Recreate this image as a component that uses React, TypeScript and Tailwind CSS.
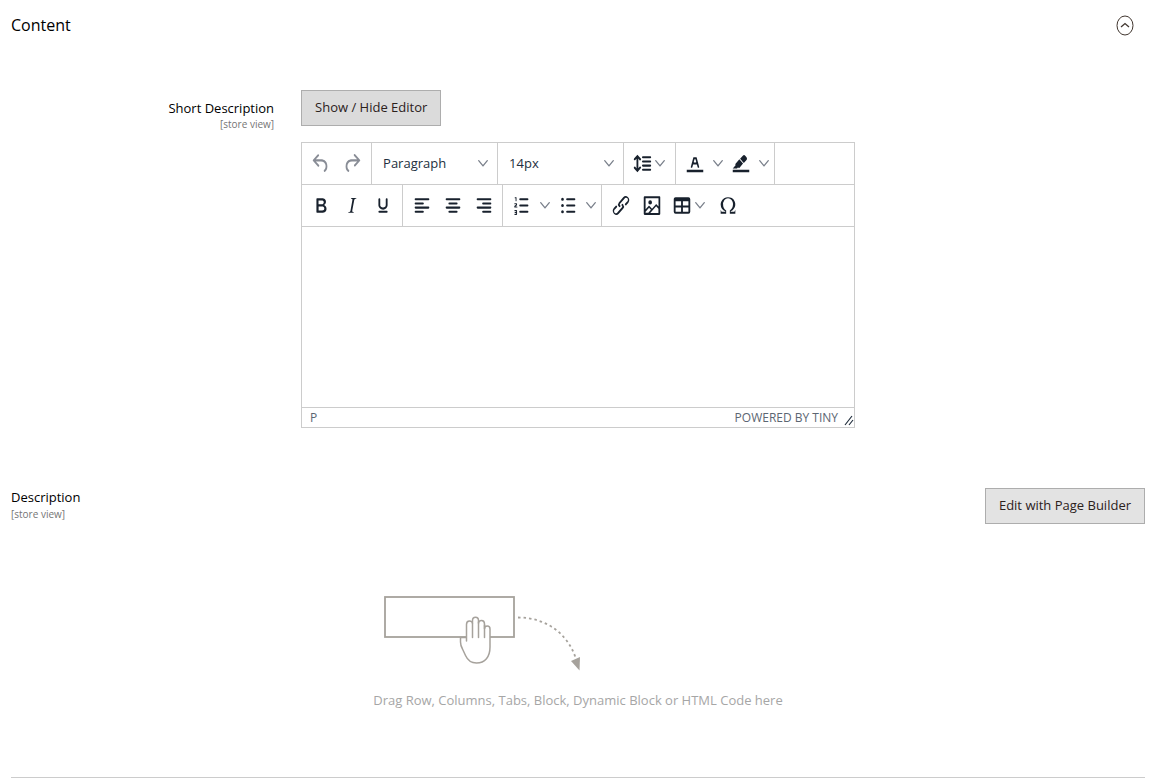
import { useState, type ReactNode } from "react";

const icons = {
  undo: "M6.4 8H12c3.7 0 6.2 2 6.8 5.1.6 2.7-.4 5.6-2.3 6.8a1 1 0 0 1-1-1.8c1.1-.6 1.8-2.7 1.4-4.6-.5-2.1-2.1-3.5-4.9-3.5H6.4l3.3 3.3a1 1 0 1 1-1.4 1.4l-5-5a1 1 0 0 1 0-1.4l5-5a1 1 0 0 1 1.4 1.4L6.4 8Z",
  redo: "M17.6 10H12c-2.8 0-4.4 1.4-4.9 3.5-.4 2 .3 4 1.4 4.6a1 1 0 1 1-1 1.8c-2-1.2-2.9-4.1-2.3-6.8.6-3 3-5.1 6.8-5.1h5.6l-3.3-3.3a1 1 0 1 1 1.4-1.4l5 5a1 1 0 0 1 0 1.4l-5 5a1 1 0 0 1-1.4-1.4l3.3-3.3Z",
  lineHeight:
    "M21 5a1 1 0 0 1 0 2h-8a1 1 0 0 1 0-2h8Zm0 4a1 1 0 0 1 0 2h-8a1 1 0 0 1 0-2h8Zm0 4a1 1 0 0 1 0 2h-8a1 1 0 0 1 0-2h8Zm0 4a1 1 0 0 1 0 2h-8a1 1 0 0 1 0-2h8ZM7 3.6l3.7 3.7a1 1 0 0 1-1.3 1.5h-.1L8 7.3v9.2l1.3-1.3a1 1 0 0 1 1.3 0h.1c.4.4.4 1 0 1.3v.1L7 20.4l-3.7-3.7a1 1 0 0 1 1.3-1.5h.1L6 16.7V7.4L4.7 8.7a1 1 0 0 1-1.3 0h-.1a1 1 0 0 1 0-1.3v-.1L7 3.6Z",
  textColor:
    "M3 18h18v2.500H3zM8.7 16h-.8a.5.5 0 0 1-.5-.6l2.7-9c.1-.3.3-.4.5-.4h2.8c.2 0 .4.1.5.4l2.7 9a.5.5 0 0 1-.5.6h-.8a.5.5 0 0 1-.4-.4l-.7-2.2c0-.3-.3-.4-.5-.4h-3.4c-.2 0-.4.1-.5.4l-.7 2.2c0 .3-.2.4-.4.4zm2.6-7.6l-.6 2a.5.5 0 0 0 .5.6h1.6a.5.5 0 0 0 .5-.6l-.6-2c0-.3-.3-.4-.5-.4h-.4c-.2 0-.4.1-.5.4z",
  highlight:
    "M3 18h18v2.500H3zM7.7 16.7H3l3.3-3.3-.7-.8L10.2 8l4 4.1-4 4.2c-.2.2-.6.2-.8 0l-.6-.7-1.1 1.1zm5-7.500L11 7.4l3-2.9a2 2 0 0 1 2.6 0L18 6c.7.7.7 2 0 2.7l-2.9 2.9-1.8-1.8-.5-.6Z",
  bold: "M7.8 19c-.3 0-.5 0-.6-.2l-.2-.5V5.7c0-.2 0-.4.2-.5l.6-.2h5c1.5 0 2.7.3 3.5 1 .7.6 1.1 1.4 1.1 2.5a3 3 0 0 1-.6 1.9c-.4.6-1 1-1.6 1.2.4.1.9.3 1.3.6s.8.7 1 1.2c.4.4.5 1 .5 1.6 0 1.3-.4 2.3-1.3 3-.8.7-2.1 1-3.8 1H7.8Zm5-8.3c.6 0 1.2-.1 1.6-.5.4-.3.6-.7.6-1.3 0-1.1-.8-1.7-2.3-1.7H9.3v3.5h3.4Zm.5 6c.7 0 1.3-.1 1.7-.4.4-.4.6-.9.6-1.5s-.2-1-.7-1.4c-.4-.3-1-.4-2-.4H9.4v3.8h4Z",
  italic:
    "m16.7 4.7-.1.9h-.3c-.6 0-1 0-1.4.3-.3.3-.4.6-.5 1.1l-2.1 9.8v.6c0 .5.4.8 1.4.8h.2l-.2.8H8l.2-.8h.2c1.1 0 1.8-.5 2-1.5l2-9.8.1-.5c0-.6-.4-.8-1.4-.8h-.3l.2-.9h5.8Z",
  underline:
    "M16 5c.6 0 1 .4 1 1v5.5a4 4 0 0 1-.4 1.8l-1 1.4a5.3 5.3 0 0 1-5.5 1 5 5 0 0 1-1.6-1c-.5-.4-.8-.9-1.1-1.4a4 4 0 0 1-.4-1.8V6c0-.6.4-1 1-1s1 .4 1 1v5.5c0 .3 0 .6.2 1l.6.7a3.3 3.3 0 0 0 2.2.8 3.4 3.4 0 0 0 2.2-.8c.3-.2.4-.5.6-.8l.2-.9V6c0-.6.4-1 1-1ZM8 17h8c.6 0 1 .4 1 1s-.4 1-1 1H8a1 1 0 0 1 0-2Z",
  alignLeft:
    "M5 5h14a1 1 0 0 1 0 2H5a1 1 0 1 1 0-2Zm0 4h8a1 1 0 0 1 0 2H5a1 1 0 1 1 0-2Zm0 8h8a1 1 0 0 1 0 2H5a1 1 0 0 1 0-2Zm0-4h14a1 1 0 0 1 0 2H5a1 1 0 0 1 0-2Z",
  alignCenter:
    "M5 5h14a1 1 0 0 1 0 2H5a1 1 0 1 1 0-2Zm3 4h8a1 1 0 0 1 0 2H8a1 1 0 1 1 0-2Zm0 8h8a1 1 0 0 1 0 2H8a1 1 0 0 1 0-2Zm-3-4h14a1 1 0 0 1 0 2H5a1 1 0 0 1 0-2Z",
  alignRight:
    "M5 5h14a1 1 0 0 1 0 2H5a1 1 0 1 1 0-2Zm6 4h8a1 1 0 0 1 0 2h-8a1 1 0 0 1 0-2Zm0 8h8a1 1 0 0 1 0 2h-8a1 1 0 0 1 0-2Zm-6-4h14a1 1 0 0 1 0 2H5a1 1 0 0 1 0-2Z",
  numbered:
    "M10 17h8a1 1 0 0 1 0 2h-8a1 1 0 0 1 0-2Zm0-6h8a1 1 0 0 1 0 2h-8a1 1 0 0 1 0-2Zm0-6h8a1 1 0 1 1 0 2h-8a1 1 0 1 1 0-2ZM6 4v3.5a.5.5 0 0 1-1 0V5h-.5a.5.5 0 0 1 0-1H6Zm-1 8.8.2.2h1.3a.5.5 0 0 1 0 1H4.1a.5.5 0 0 1-.5-.5V13c0-.3.1-.5.3-.7l1.5-1.1.1-.2-.2-.2H4.1a.5.5 0 0 1 0-1H6c.3 0 .6.3.6.6v.9c0 .3-.1.5-.3.7L5 12.8ZM6.6 17v3.4c0 .3-.3.6-.6.6H4.2a.5.5 0 0 1 0-1h1.4v-.8H4.4a.5.5 0 0 1 0-1h1.2v-.8H4.2a.5.5 0 0 1 0-1H6c.3 0 .6.3.6.6Z",
  bullets:
    "M11 5h8a1 1 0 0 1 0 2h-8a1 1 0 0 1 0-2Zm0 6h8a1 1 0 0 1 0 2h-8a1 1 0 0 1 0-2Zm0 6h8a1 1 0 0 1 0 2h-8a1 1 0 0 1 0-2ZM4.5 6a1.5 1.5 0 1 1 3 0 1.5 1.5 0 0 1-3 0Zm0 6a1.5 1.5 0 1 1 3 0 1.5 1.5 0 0 1-3 0Zm0 6a1.5 1.5 0 1 1 3 0 1.5 1.5 0 0 1-3 0Z",
  link: "M6.2 12.3a1 1 0 0 1 1.4 1.4l-2 2a2 2 0 1 0 2.6 2.8l4.8-4.8a1 1 0 0 0 0-1.4 1 1 0 1 1 1.4-1.3 2.9 2.9 0 0 1 0 4L9.6 20a3.9 3.9 0 0 1-5.5-5.5l2-2Zm11.6-.6a1 1 0 0 1-1.4-1.4l2-2a2 2 0 1 0-2.6-2.8L11 10.3a1 1 0 0 0 0 1.4A1 1 0 1 1 9.6 13a2.9 2.9 0 0 1 0-4L14.4 4a3.9 3.9 0 0 1 5.5 5.5l-2 2Z",
  image:
    "m5 15.7 3.3-3.2c.3-.3.7-.3 1 0L12 15l4.1-4c.3-.4.8-.4 1 0l2 1.9V5H5v10.7ZM5 18V19h3l2.8-2.9-2-2L5 17.9Zm14-3-2.5-2.4-6.4 6.5H19v-4ZM4 3h16c.6 0 1 .4 1 1v16c0 .6-.4 1-1 1H4a1 1 0 0 1-1-1V4c0-.6.4-1 1-1Zm6 8a2 2 0 1 0 0-4 2 2 0 0 0 0 4Z",
  table:
    "M19 4a2 2 0 0 1 2 2v12a2 2 0 0 1-2 2H5a2 2 0 0 1-2-2V6c0-1.1.9-2 2-2h14ZM5 14v4h6v-4H5Zm14 0h-6v4h6v-4Zm0-6h-6v4h6V8ZM5 12h6V8H5v4Z",
  omega:
    "M15 18h4l1-2v4h-6v-3.3l1.4-1a6 6 0 0 0 1.8-2.9 6.3 6.3 0 0 0-.1-4.1 5.8 5.8 0 0 0-3-3.2c-.6-.3-1.3-.5-2.1-.5a5.1 5.1 0 0 0-3.9 1.8 6.3 6.3 0 0 0-1.3 6 6.2 6.2 0 0 0 1.8 3l1.4.9V20H4v-4l1 2h4v-.5l-2-1L5.4 15A6.5 6.5 0 0 1 4 11c0-1 .2-1.9.6-2.7A7 7 0 0 1 7.8 5C9.1 4.3 10.5 4 12 4s2.9.3 4.2.9a7 7 0 0 1 3.2 3.5 6.4 6.4 0 0 1-.9 6.5L17 16.5l-2 1v.5Z",
};

type IconName = keyof typeof icons;

function Icon({ name }: { name: IconName }) {
  return (
    <svg viewBox="0 0 24 24" preserveAspectRatio="none" aria-hidden="true" className="h-[25px] w-[22px] shrink-0 fill-current">
      <path fillRule="evenodd" d={icons[name]} />
    </svg>
  );
}

function Chevron() {
  return (
    <svg viewBox="0 0 10 11" aria-hidden="true" className="h-[11px] w-[10px] shrink-0 fill-none stroke-[#7a808b]">
      <path d="M.7 2.700 5 7.900 9.300 2.700" strokeWidth="1.300" strokeLinecap="round" strokeLinejoin="round" />
    </svg>
  );
}

function Group({ children, edge }: { children: ReactNode; edge?: "first" | "last" }) {
  const padding = edge === "first" ? "border-r pr-1 pl-[3px]" : edge === "last" ? "px-[3px]" : "border-r px-[3px]";
  return <div className={`flex border-[#ccc] ${padding}`}>{children}</div>;
}

function Tool({ name, label, disabled = false }: { name: IconName; label: string; disabled?: boolean }) {
  return (
    <button type="button" aria-label={label} disabled={disabled} className="flex w-[31px] items-center justify-center disabled:text-[#898d96]">
      <Icon name={name} />
    </button>
  );
}

function SplitTool({ name, label }: { name: IconName; label: string }) {
  return (
    <div className="flex">
      <Tool name={name} label={label} />
      <button type="button" aria-label={`${label} options`} className="flex w-[15px] items-center justify-center">
        <Chevron />
      </button>
    </div>
  );
}

function MenuTool({ name, label }: { name: IconName; label: string }) {
  return (
    <button type="button" aria-label={label} className="flex w-[45px] items-center gap-[2px] pl-1">
      <Icon name={name} />
      <Chevron />
    </button>
  );
}

function Picker({ label, options }: { label: string; options: string[] }) {
  return (
    <div className="relative flex w-[126px] items-center border-r border-[#ccc]">
      <select aria-label={label} className="h-full w-full appearance-none bg-transparent pr-6 pl-[11px] text-[13px] text-[#222f3e] outline-none">
        {options.map((option) => (
          <option key={option}>{option}</option>
        ))}
      </select>
      <span className="pointer-events-none absolute right-[9px]">
        <Chevron />
      </span>
    </div>
  );
}

function ActionButton({ children, onClick, className }: { children: ReactNode; onClick?: () => void; className: string }) {
  return (
    <button type="button" onClick={onClick} className={`h-9 border border-[#adadad] px-[13px] text-[13px] font-medium text-[#2b211b] ${className}`}>
      {children}
    </button>
  );
}

function Editor() {
  return (
    <div className="border border-[#ccc] text-[#18212d]">
      <div role="toolbar" aria-label="Text style" className="flex h-[42px] border-b border-[#ccc]">
        <Group edge="first">
          <Tool name="undo" label="Undo" disabled />
          <Tool name="redo" label="Redo" disabled />
        </Group>
        <Picker label="Block format" options={["Paragraph", "Heading 1", "Heading 2"]} />
        <Picker label="Font size" options={["14px", "16px", "18px"]} />
        <Group>
          <MenuTool name="lineHeight" label="Line height" />
        </Group>
        <Group>
          <SplitTool name="textColor" label="Text color" />
          <SplitTool name="highlight" label="Background color" />
        </Group>
      </div>
      <div role="toolbar" aria-label="Formatting" className="flex h-[42px] border-b border-[#ccc]">
        <Group edge="first">
          <Tool name="bold" label="Bold" />
          <Tool name="italic" label="Italic" />
          <Tool name="underline" label="Underline" />
        </Group>
        <Group>
          <Tool name="alignLeft" label="Align left" />
          <Tool name="alignCenter" label="Align center" />
          <Tool name="alignRight" label="Align right" />
        </Group>
        <Group>
          <SplitTool name="numbered" label="Numbered list" />
          <SplitTool name="bullets" label="Bullet list" />
        </Group>
        <Group edge="last">
          <Tool name="link" label="Insert link" />
          <Tool name="image" label="Insert image" />
          <MenuTool name="table" label="Table" />
          <Tool name="omega" label="Special character" />
        </Group>
      </div>
      <textarea id="short-description" className="block h-[180px] w-full resize-none p-3 text-[13px] outline-none" />
      <div className="flex h-5 items-center border-t border-[#ccc] pl-2 text-xs text-[#5c6672]">
        <span className="grow">P</span>
        <a href="#tiny">POWERED BY TINY</a>
        <svg viewBox="0 0 10 12" aria-hidden="true" className="mt-1 ml-[6px] h-3 w-[10px] fill-none stroke-[#222f3e]">
          <path d="M1 11 8 2M5 11 9 6" strokeWidth="1.2" />
        </svg>
      </div>
    </div>
  );
}

function DropIllustration() {
  return (
    <svg viewBox="384 595 198 76" aria-hidden="true" className="ml-[11px] h-[76px] w-[198px] fill-none stroke-[#a6a29c]">
      <rect x="385" y="597" width="129" height="40" strokeWidth="1.8" />
      <path
        fill="#fff"
        strokeWidth="1.5"
        strokeLinecap="round"
        d="M466.500 641V624.500c0-4.500 6-4.500 6-.5v-3.500c0-4.500 6-4.500 6 0v3c0-4 6-4 6 .5v5c0-4 5.500-4 5.500 0V647c0 10-5 16-13.500 16-5 0-8.500-2-11-7.500l-3-6.500c-1.500-2.500-2-4-2-7v-4.500h6"
      />
      <path strokeWidth="1.500" strokeLinecap="round" d="M472.500 624v13.500M478.500 622v15.500M484.500 625v12.500" />
      <path strokeWidth="1.800" strokeDasharray="2.500 3" d="M518 617.500c27 0 49 15 57.500 40" />
      <path d="m571 661 9-4-.5 13.500Z" className="fill-[#a6a29c] stroke-none" />
    </svg>
  );
}

export default function App() {
  const [open, setOpen] = useState(true);
  const [showEditor, setShowEditor] = useState(true);

  return (
    <main className="bg-white pr-4 pl-[11px] font-['Open_Sans','Noto_Sans',sans-serif] text-black">
      <section className="border-b border-[#ccc]">
        <header className="flex h-[50px] items-center justify-between pr-[11px]">
          <h2 className="text-base font-medium">Content</h2>
          <button type="button" aria-label="Toggle content section" aria-expanded={open} onClick={() => setOpen(!open)}>
            <svg viewBox="0 0 18 22" aria-hidden="true" className="h-[22px] w-[18px] fill-none stroke-[#41362f]">
              <ellipse cx="9" cy="11.500" rx="8" ry="9.500" strokeWidth="1" />
              <path d="m5 13 4-3.500 4 3.500" strokeWidth="1.300" />
            </svg>
          </button>
        </header>

        {open && (
          <>
            <div className="flex gap-[27px] pt-10">
              <div className="w-[23.2%] shrink-0 pt-[10px] text-right">
                <label htmlFor="short-description" className="block text-[13px] leading-4 font-medium">
                  Short Description
                </label>
                <span className="block text-[10px] leading-4 text-[#757575]">[store view]</span>
              </div>
              <div className="w-[49%] max-w-[554px]">
                <ActionButton className="mb-4 bg-[#dbdbdb]" onClick={() => setShowEditor(!showEditor)}>
                  Show / Hide Editor
                </ActionButton>
                {showEditor && <Editor />}
              </div>
            </div>

            <div className="flex items-start justify-between pt-[60px]">
              <div>
                <h3 className="text-[13px] leading-[18px] font-medium">Description</h3>
                <p className="text-[10px] leading-4 text-[#757575]">[store view]</p>
              </div>
              <ActionButton className="bg-[#e3e3e3]">Edit with Page Builder</ActionButton>
            </div>

            <div className="flex justify-center pt-[71px] pb-[66px]">
              <div>
                <DropIllustration />
                <p className="mt-[18px] text-[13px] leading-[22px] text-[#a6a6a6]">
                  Drag Row, Columns, Tabs, Block, Dynamic Block or HTML Code here
                </p>
              </div>
            </div>
          </>
        )}
      </section>
    </main>
  );
}
